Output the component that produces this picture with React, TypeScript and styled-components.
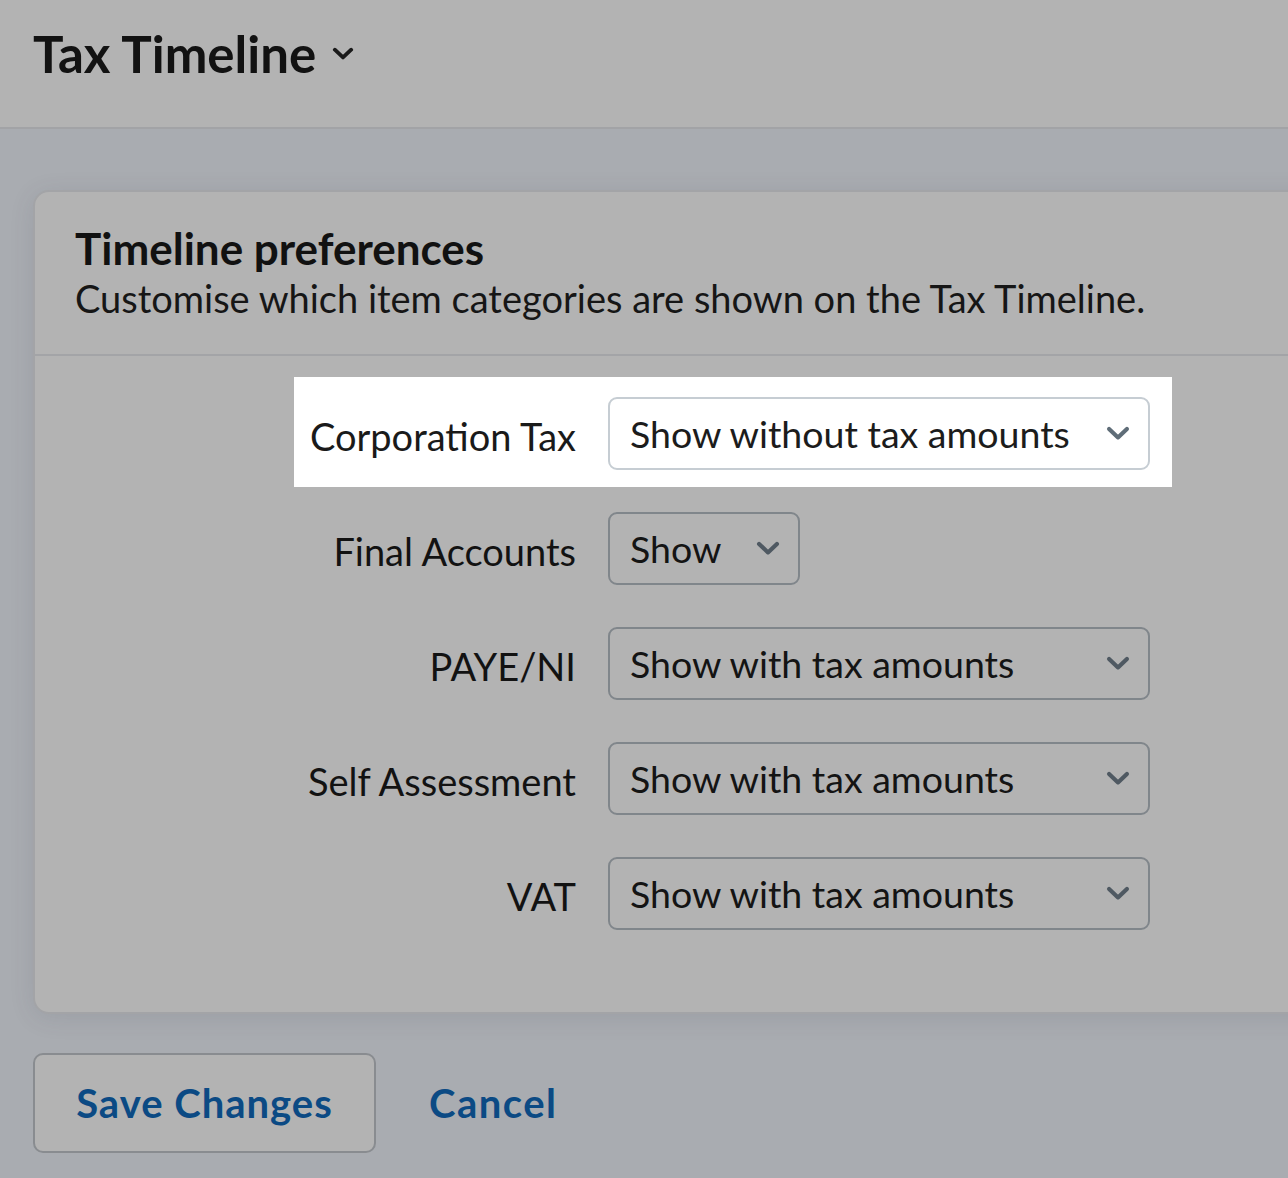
import React from 'react';
import styled, { createGlobalStyle } from 'styled-components';

const GlobalStyle = createGlobalStyle`
  html, body {
    margin: 0;
    padding: 0;
    background: #a9acb1;
    overflow-x: hidden;
  }
  body {
    font-family: Lato, "Liberation Sans", sans-serif;
    color: #111;
  }
`;

const Page = styled.div`
  width: 1288px;
  min-height: 1178px;
  background: #a9acb1;
`;

const Header = styled.header`
  height: 129px;
  background: #b3b3b3;
  border-bottom: 2px solid #a2a3a6;
  display: flex;
  align-items: center;
  padding: 0 0 20px 33px;
  box-sizing: border-box;
  gap: 16px;
`;

const Title = styled.h1`
  margin: 0;
  font-size: 51px;
  font-weight: 700;
  color: #121212;
`;

const Main = styled.main`
  padding: 61px 0 0 33px;
`;

const Card = styled.section`
  width: 1300px;
  background: #b3b3b3;
  border: 2px solid #a3a4a7;
  border-radius: 16px;
  box-shadow: 0 4px 24px rgba(60, 66, 80, 0.12);
`;

const CardHead = styled.div`
  padding: 30px 40px 32px;
  border-bottom: 2px solid #a3a4a7;
`;

const CardTitle = styled.h2`
  margin: 0;
  font-size: 44px;
  font-weight: 700;
  line-height: 52px;
  color: #111;
`;

const CardText = styled.p`
  margin: 0;
  font-size: 38px;
  line-height: 48px;
  color: #161616;
`;

const Form = styled.div`
  display: flex;
  flex-direction: column;
  gap: 5px;
  padding: 21px 0 65px 259px;
`;

const Row = styled.div<{ $active?: boolean }>`
  display: flex;
  align-items: center;
  gap: 32px;
  width: fit-content;
  padding: 20px 22px 17px 0;
  background: ${(p) => (p.$active ? '#ffffff' : 'transparent')};
`;

const Label = styled.label<{ $active?: boolean }>`
  width: 282px;
  padding-top: 4px;
  text-align: right;
  font-size: 38px;
  color: ${(p) => (p.$active ? '#1a1a1a' : '#121212')};
  white-space: nowrap;
`;

const Select = styled.div<{ $active?: boolean; $width: number }>`
  box-sizing: border-box;
  width: ${(p) => p.$width}px;
  height: 73px;
  display: flex;
  align-items: center;
  justify-content: space-between;
  padding: 0 18px 0 20px;
  border: 2px solid ${(p) => (p.$active ? '#c6cdd3' : '#80868b')};
  border-radius: 9px;
  background: ${(p) => (p.$active ? '#ffffff' : 'transparent')};
  font-size: 37.5px;
  color: ${(p) => (p.$active ? '#1c1c1c' : '#141414')};
`;

const Chevron = ({ color, size = 24 }: { color: string; size?: number }) => (
  <svg width={size} height={size * 0.62} viewBox="0 0 24 15" fill="none">
    <polyline points="3,3 12,11.5 21,3" stroke={color} strokeWidth="4.2" strokeLinecap="round" strokeLinejoin="round" />
  </svg>
);

const Actions = styled.div`
  display: flex;
  align-items: center;
  gap: 53px;
  padding-top: 39px;
`;

const SaveButton = styled.button`
  box-sizing: border-box;
  width: 343px;
  height: 100px;
  border: 2px solid #898c90;
  border-radius: 10px;
  background: #b3b3b3;
  font-family: Lato, "Liberation Sans", sans-serif;
  font-size: 40px;
  font-weight: 700;
  letter-spacing: 1px;
  color: #0b4a84;
`;

const LinkButton = styled.button`
  border: none;
  background: none;
  padding: 0;
  font-family: Lato, "Liberation Sans", sans-serif;
  font-size: 40px;
  font-weight: 700;
  letter-spacing: 1.5px;
  color: #0b4a84;
`;

const rows = [
  { label: 'Corporation Tax', value: 'Show without tax amounts', width: 542, active: true },
  { label: 'Final Accounts', value: 'Show', width: 192 },
  { label: 'PAYE/NI', value: 'Show with tax amounts', width: 542 },
  { label: 'Self Assessment', value: 'Show with tax amounts', width: 542 },
  { label: 'VAT', value: 'Show with tax amounts', width: 542 },
];

export default function App() {
  return (
    <Page>
      <GlobalStyle />
      <Header>
        <Title>Tax Timeline</Title>
        <Chevron color="#1a1a1a" size={22} />
      </Header>
      <Main>
        <Card>
          <CardHead>
            <CardTitle>Timeline preferences</CardTitle>
            <CardText>Customise which item categories are shown on the Tax Timeline.</CardText>
          </CardHead>
          <Form>
            {rows.map((r) => (
              <Row key={r.label} $active={r.active}>
                <Label $active={r.active}>{r.label}</Label>
                <Select $active={r.active} $width={r.width}>
                  <span>{r.value}</span>
                  <Chevron color={r.active ? '#5f6d78' : '#4f5962'} />
                </Select>
              </Row>
            ))}
          </Form>
        </Card>
        <Actions>
          <SaveButton>Save Changes</SaveButton>
          <LinkButton>Cancel</LinkButton>
        </Actions>
      </Main>
    </Page>
  );
}
